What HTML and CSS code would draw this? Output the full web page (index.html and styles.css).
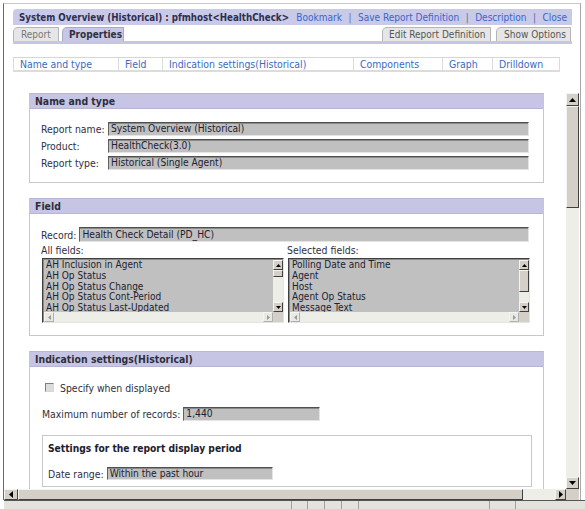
FILE: index.html
```html
<!DOCTYPE html>
<html>
<head>
<meta charset="utf-8">
<title>System Overview (Historical)</title>
<link rel="stylesheet" href="styles.css">
</head>
<body>
<div class="window">
  <div class="top">
    <div class="titlebar">
      <span class="title">System Overview (Historical) : pfmhost&lt;HealthCheck&gt;</span>
      <span class="links"><a>Bookmark</a><span class="sep">|</span><a>Save Report Definition</a><span class="sep">|</span><a>Description</a><span class="sep">|</span><a>Close</a></span>
    </div>
    <div class="tabs">
      <span class="tab tab-report">Report</span>
      <span class="tab tab-active">Properties</span>
      <span class="tab-spacer"></span>
      <span class="tab tab-edit">Edit Report Definition</span>
      <span class="tab tab-options">Show Options</span>
    </div>
    <div class="nav">
      <a class="nav-item">Name and type</a>
      <a class="nav-item">Field</a>
      <a class="nav-item">Indication settings(Historical)</a>
      <a class="nav-item">Components</a>
      <a class="nav-item">Graph</a>
      <a class="nav-item">Drilldown</a>
    </div>
  </div>
  <div class="frame">
    <div class="viewport">
      <div class="content">
        <section class="section sec-name">
          <div class="sec-head">Name and type</div>
          <div class="sec-body name-grid">
            <span class="label">Report name:</span><span class="field">System Overview (Historical)</span>
            <span class="label">Product:</span><span class="field">HealthCheck(3.0)</span>
            <span class="label">Report type:</span><span class="field">Historical (Single Agent)</span>
          </div>
        </section>

        <section class="section sec-field">
          <div class="sec-head">Field</div>
          <div class="sec-body">
            <div class="row">
              <span class="label">Record:</span><span class="field field-grow">Health Check Detail (PD_HC)</span>
            </div>
            <div class="lists">
              <div class="list-col">
                <div class="label list-label">All fields:</div>
                <div class="listbox">
                  <ul class="lb-items">
                    <li>AH Inclusion in Agent</li>
                    <li>AH Op Status</li>
                    <li>AH Op Status Change</li>
                    <li>AH Op Status Cont-Period</li>
                    <li>AH Op Status Last-Updated</li>
                  </ul>
                  <div class="lb-vbar">
                    <span class="sb-btn"><svg width="5" height="3" viewBox="0 0 5 3"><path d="M2.5 0L5 3H0z"/></svg></span>
                    <span class="sb-thumb thumb-small"></span>
                    <span class="sb-track"></span>
                    <span class="sb-btn"><svg width="5" height="3" viewBox="0 0 5 3"><path d="M0 0H5L2.5 3z"/></svg></span>
                  </div>
                  <div class="lb-hbar">
                    <span class="sb-btn sb-h"><svg width="3" height="5" viewBox="0 0 3 5"><path d="M3 0V5L0 2.5z" fill="#999"/></svg></span>
                    <span class="sb-track"></span>
                    <span class="sb-btn sb-h"><svg width="3" height="5" viewBox="0 0 3 5"><path d="M0 0L3 2.5L0 5z" fill="#999"/></svg></span>
                  </div>
                  <div class="lb-corner"></div>
                </div>
              </div>
              <div class="list-col">
                <div class="label list-label">Selected fields:</div>
                <div class="listbox">
                  <ul class="lb-items">
                    <li>Polling Date and Time</li>
                    <li>Agent</li>
                    <li>Host</li>
                    <li>Agent Op Status</li>
                    <li>Message Text</li>
                  </ul>
                  <div class="lb-vbar">
                    <span class="sb-btn"><svg width="5" height="3" viewBox="0 0 5 3"><path d="M2.5 0L5 3H0z"/></svg></span>
                    <span class="sb-thumb thumb-big"></span>
                    <span class="sb-track"></span>
                    <span class="sb-btn"><svg width="5" height="3" viewBox="0 0 5 3"><path d="M0 0H5L2.5 3z"/></svg></span>
                  </div>
                  <div class="lb-hbar">
                    <span class="sb-btn sb-h"><svg width="3" height="5" viewBox="0 0 3 5"><path d="M3 0V5L0 2.5z" fill="#999"/></svg></span>
                    <span class="sb-track"></span>
                    <span class="sb-btn sb-h"><svg width="3" height="5" viewBox="0 0 3 5"><path d="M0 0L3 2.5L0 5z" fill="#999"/></svg></span>
                  </div>
                  <div class="lb-corner"></div>
                </div>
              </div>
            </div>
          </div>
        </section>

        <section class="section sec-ind">
          <div class="sec-head">Indication settings(Historical)</div>
          <div class="sec-body">
            <label class="check-row"><span class="checkbox"></span><span class="label">Specify when displayed</span></label>
            <div class="row max-row">
              <span class="label">Maximum number of records:</span><span class="field field-max">1,440</span>
            </div>
            <div class="inner-box">
              <div class="inner-head">Settings for the report display period</div>
              <div class="row date-row">
                <span class="label">Date range:</span><span class="field field-date">Within the past hour</span>
              </div>
            </div>
          </div>
        </section>
      </div>
    </div>
    <div class="vbar">
      <span class="sb-btn sb-big"><svg width="7" height="4" viewBox="0 0 7 4"><path d="M3.5 0L7 4H0z"/></svg></span>
      <span class="sb-thumb vthumb"></span>
      <span class="sb-track"></span>
      <span class="sb-btn sb-big"><svg width="7" height="4" viewBox="0 0 7 4"><path d="M0 0H7L3.5 4z"/></svg></span>
    </div>
    <div class="hbar">
      <span class="sb-btn sb-hbig"><svg width="4" height="7" viewBox="0 0 4 7"><path d="M4 0V7L0 3.5z"/></svg></span>
      <span class="sb-thumb hthumb"></span>
      <span class="sb-track"></span>
      <span class="sb-btn sb-hbig"><svg width="4" height="7" viewBox="0 0 4 7"><path d="M0 0L4 3.5L0 7z"/></svg></span>
    </div>
    <div class="corner"></div>
  </div>
</div>
<div class="statusbar">
  <span class="pane p1"></span><span class="pane p2"></span><span class="pane p3"></span><span class="pane p4"></span><span class="pane p5"></span><span class="pane p6"></span><span class="pane p7"></span><span class="pane p8"></span>
</div>
</body>
</html>
```

FILE: styles.css
```css
* { box-sizing: border-box; }
html, body { margin: 0; padding: 0; background: #fff; }
body {
  width: 585px;
  height: 509px;
  overflow: hidden;
  font-family: "DejaVu Sans", Verdana, sans-serif;
  font-stretch: condensed;
  font-size: 10px;
  color: #30303f;
}
a { text-decoration: none; cursor: pointer; }

.window {
  margin: 3px 0 0 3px;
  width: 578px;
  height: 497px;
  border-left: 1px solid #6a6a6a;
  border-top: 1px solid #c8c8c8;
  border-right: 1px solid #a8a8a8;
  display: flex;
  flex-direction: column;
}

.top { padding: 5px 8px 0 9px; }

.titlebar {
  height: 16px;
  background: #c9c9e8;
  border-top-left-radius: 4px;
  display: flex;
  align-items: center;
  justify-content: space-between;
  padding: 0 5px 0 6px;
  white-space: nowrap;
}
.title { font-weight: bold; color: #2e2e50; font-size: 9.7px; }
.links a { color: #3867c8; }
.sep { color: #6a6aa8; margin: 0 6.5px; }

.tabs {
  display: flex;
  margin-top: 2px;
  height: 17px;
  border-bottom: 3px solid #c6c6e2;
}
.tab {
  height: 14px;
  line-height: 13px;
  padding: 0 6px;
  border: 1px solid #b6b6b6;
  border-bottom: none;
  border-top-left-radius: 5px;
  background: #e6e6e6;
  color: #777;
  margin-right: 3px;
  white-space: nowrap;
}
.tab-report { width: 46px; padding-left: 7px; }
.tab-active { width: 62px; background: #c8c8e6; color: #30303f; font-weight: bold; border-color: #a8a8c8; }
.tab-spacer { flex: 1; }
.tab-edit { width: 109px; color: #555; margin-right: 5px; }
.tab-options { width: 75px; color: #555; padding-left: 7px; margin-right: 1px; }

.nav {
  margin-top: 13px;
  width: 547px;
  height: 15px;
  display: grid;
  grid-template-columns: 105px 44px 191px 89px 50px 68px;
  border-top: 1px solid #d6d6d6;
  border-bottom: 2px solid #dcdcdc;
  border-right: 1px solid #dcdcdc;
}
.nav-item {
  padding-left: 6px;
  line-height: 12px;
  font-size: 10.4px;
  color: #3a6ac0;
  border-left: 1px solid #dcdcdc;
  white-space: nowrap;
}

.frame {
  margin-top: 21px;
  margin-right: 1px;
  display: grid;
  grid-template-columns: 1fr 13px;
  grid-template-rows: 396px 11px;
}
.viewport { overflow: hidden; }
.content {
  padding-left: 25px;
  display: flex;
  flex-direction: column;
  gap: 15px;
}

.section {
  width: 515px;
  flex: none;
  border: 1px solid #c8c8c8;
  border-top-color: #b8b8d6;
}
.sec-head {
  height: 15px;
  line-height: 14px;
  background: #c6c6e4;
  border-bottom: 1px solid #b6b6d4;
  padding-left: 5px;
  font-weight: bold;
  font-size: 10.4px;
  color: #2e2e3c;
}
.sec-body { padding: 13px 14px 12px 11px; }

.name-grid {
  display: grid;
  grid-template-columns: 67px 1fr;
  row-gap: 3px;
  align-items: center;
}
.label { white-space: nowrap; color: #30303f; line-height: 12px; font-size: 10.4px; }

.field {
  display: block;
  height: 14px;
  line-height: 12px;
  padding-left: 2px;
  font-size: 10.2px;
  background: #c0c0c0;
  border: 1px solid;
  border-color: #505050 #e4e4e4 #e4e4e4 #606060;
  box-shadow: inset 0 1px #8a8a8a;
  color: #202030;
  white-space: nowrap;
  overflow: hidden;
}

.row { display: flex; align-items: center; gap: 3px; }
.field-grow { flex: 1; height: 15px; line-height: 13px; }

.lists {
  display: grid;
  grid-template-columns: 244px 244px;
  column-gap: 2px;
  margin-top: 2px;
}
.list-label { line-height: 13px; margin-bottom: 1px; }
.listbox {
  width: 242px;
  height: 65px;
  margin-left: 1px;
  background: #c0c0c0;
  border: 1px solid;
  border-color: #404040 #e4e4e4 #e4e4e4 #404040;
  box-shadow: inset 1px 1px #8a8a8a;
  padding: 1px 0 0 1px;
  display: grid;
  grid-template-columns: 1fr 10px;
  grid-template-rows: 52px 10px;
}
.lb-items {
  margin: 0;
  padding: 0 0 0 2px;
  list-style: none;
  overflow: hidden;
  line-height: 10.8px;
  color: #202030;
  white-space: nowrap;
}
.lb-vbar { display: flex; flex-direction: column; background: #eeeee8; }
.lb-hbar { display: flex; background: #f0f0ec; }
.lb-corner { background: #d4d0c8; }

.sb-btn {
  display: flex;
  align-items: center;
  justify-content: center;
  flex: none;
  height: 10px;
  width: 10px;
  background: #d4d0c8;
  border: 1px solid;
  border-color: #f4f4f0 #404040 #404040 #f4f4f0;
}
.sb-btn svg { display: block; fill: #000; }
.sb-thumb {
  flex: none;
  background: #d4d0c8;
  border: 1px solid;
  border-color: #f4f4f0 #404040 #404040 #f4f4f0;
}
.sb-track { flex: 1; background: #eeeee8; }
.thumb-small { height: 7px; }
.thumb-big { height: 22px; }
.sb-h { border-color: #f4f4f0 #b0b0b0 #b0b0b0 #f4f4f0; background: #e8e8e4; }

.check-row { display: flex; align-items: center; height: 13px; margin-top: 1px; }
.checkbox {
  width: 9px;
  height: 9px;
  margin: 0 6px 0 4px;
  border: 1px solid;
  border-color: #808080 #d8d8d8 #d8d8d8 #808080;
  background: #dcdcdc;
}
.max-row { margin-top: 13px; }
.max-row .label { padding-left: 1px; }
.field-max { width: 137px; }

.inner-box {
  margin: 14px 0 0 1px;
  width: 490px;
  height: 52px;
  border: 1px solid #c8c8c8;
  padding: 6px 5px 5px 5px;
}
.inner-head { font-weight: bold; line-height: 13px; color: #20202c; font-size: 10.2px; }
.date-row { margin-top: 12px; }
.field-date { width: 166px; height: 13px; line-height: 11px; }

.vbar { display: flex; flex-direction: column; background: #eeeee8; }
.sb-big { width: 13px; height: 13px; }
.vthumb { height: 102px; }
.vbar .sb-btn:last-child { height: 12px; }

.hbar { display: flex; background: #eeeee8; }
.sb-hbig { width: 14px; height: 11px; }
.hbar .sb-btn:last-child { width: 11px; }
.hthumb { width: 505px; }
.corner { background: #d4d0c8; }

.statusbar {
  margin-left: 4px;
  height: 9px;
  border-top: 1px solid #555;
  background: #e4e2dc;
  display: flex;
}
.pane { height: 8px; border-right: 1px solid #a0a0a0; }
.p1 { width: 288px; }
.p2 { width: 16px; }
.p3 { width: 17px; }
.p4 { width: 17px; }
.p5 { width: 17px; }
.p6 { width: 131px; }
.p7 { width: 26px; }
.p8 { width: 60px; border-right: none; }
```
